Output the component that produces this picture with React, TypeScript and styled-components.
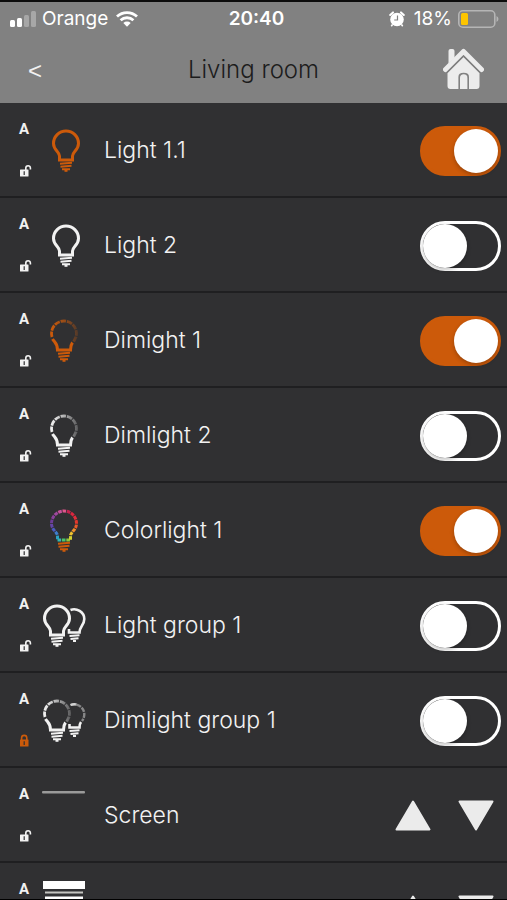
import React, { useState } from "react";
import styled, { createGlobalStyle } from "styled-components";

const ORANGE = "#cc5a0a";
const PALE = "#f2f2f2";

const GlobalStyle = createGlobalStyle`
  *, *::before, *::after { box-sizing: border-box; }
  body { margin: 0; background: #000; }
`;

const Screen = styled.div`
  display: flex;
  flex-direction: column;
  height: 100vh;
  overflow: hidden;
  border-top: 2px solid #0c0c0c;
  border-bottom: 1px solid #000;
  background: #303032;
  color: ${PALE};
  font-family: Inter, "Liberation Sans", sans-serif;
`;

const Header = styled.header`
  flex: none;
  background: #818181;
`;

const StatusBar = styled.div`
  display: grid;
  grid-template-columns: 1fr auto 1fr;
  align-items: center;
  height: 33px;
  padding: 0 8px 0 10px;
  color: #fff;
  font-size: 19px;
  line-height: 24px;
`;

const StatusGroup = styled.div<{ $end?: boolean }>`
  display: flex;
  align-items: center;
  gap: 6px;
  justify-content: ${(p) => (p.$end ? "flex-end" : "flex-start")};
`;

const Clock = styled.time`
  padding-left: 4px;
  font-weight: 600;
`;

const NavBar = styled.div`
  display: grid;
  grid-template-columns: 1fr auto 1fr;
  align-items: center;
  height: 68px;
  padding: 0 23px;
`;

const NavButton = styled.button<{ $end?: boolean }>`
  display: flex;
  justify-self: ${(p) => (p.$end ? "end" : "start")};
  padding: 0;
  border: 0;
  background: none;
  color: ${PALE};
  cursor: pointer;
`;

const BackButton = styled(NavButton)`
  padding: 4px 5px 0;
  font: 24px/28px "Liberation Sans", sans-serif;
`;

const Title = styled.h1`
  margin: 0;
  padding-top: 2px;
  color: #1c1c1c;
  font-size: 24px;
  font-weight: 300;
  line-height: 32px;
`;

const List = styled.ul`
  flex: 1;
  min-height: 0;
  margin: 0;
  padding: 0;
  overflow-y: auto;
  scrollbar-width: none;
  list-style: none;
`;

const Row = styled.li`
  display: grid;
  grid-template-columns: 23px 44px 1fr auto;
  align-items: center;
  height: 95px;
  padding: 0 6px 0 19px;
  border-bottom: 2px solid #1f1f21;
`;

const Marks = styled.div`
  display: flex;
  flex-direction: column;
  align-items: flex-start;
  gap: 26px;
  padding-bottom: 4px;
`;

const Auto = styled.span`
  font: 700 15px/18px Roboto, sans-serif;
`;

const Name = styled.label`
  padding-left: 18px;
  font-size: 23px;
  font-weight: 300;
  line-height: 32px;
`;

const Toggle = styled.input`
  appearance: none;
  width: 81px;
  height: 50px;
  margin: 2px 0 0;
  border: 3px solid #fff;
  border-radius: 25px;
  cursor: pointer;

  &::before {
    content: "";
    display: block;
    width: 44px;
    height: 44px;
    border-radius: 50%;
    background: #fff;
    box-shadow: 0 2px 4px rgba(0, 0, 0, 0.25);
  }

  &:checked {
    border-color: ${ORANGE};
    background: ${ORANGE};
  }

  &:checked::before {
    margin-left: auto;
  }
`;

const Arrows = styled.div`
  display: flex;
  gap: 27px;
  padding-right: 7px;
`;

const ArrowButton = styled.button`
  display: flex;
  padding: 0;
  border: 0;
  background: none;
  cursor: pointer;
`;

const Drawing = styled.svg`
  display: block;
  flex: none;
`;

const BODY = "M-6.5 57 H6.5 V53 C6.5 49 12.5 47 12.5 40.5 A12.5 12.5 0 0 0 -12.5 40.5 C-12.5 47 -6.5 49 -6.5 53 Z";

function Base({ color }: { color: string }) {
  return (
    <g stroke={color} strokeWidth="2" fill="none">
      <path d="M-6 60.8 L6 59.8 M-5.5 63.8 L5.5 62.8 M-4 66.2 H4" />
      <path d="M-1.5 67.8 H1.5" />
    </g>
  );
}

function PlainBulb({ color }: { color: string }) {
  return (
    <g>
      <path d={BODY} fill="none" stroke={color} strokeWidth="3" />
      <Base color={color} />
    </g>
  );
}

function DimBulb({ color, id }: { color: string; id: string }) {
  return (
    <g>
      <defs>
        <linearGradient id={id} gradientUnits="userSpaceOnUse" x1="-13" y1="0" x2="13" y2="0">
          <stop offset="0" stopColor={color} />
          <stop offset="0.45" stopColor={color} stopOpacity="0.7" />
          <stop offset="1" stopColor={color} stopOpacity="0.25" />
        </linearGradient>
      </defs>
      <path
        d="M-12 44 A12.5 12.5 0 1 1 12 44 L9.5 49"
        fill="none"
        stroke={`url(#${id})`}
        strokeWidth="2.8"
        strokeDasharray="5.6 0.9"
      />
      <path d="M-11.5 46 C-9.5 49.5 -6.5 50 -6.5 57 H6.5 C6.5 53 7 51.5 8.5 49.5" fill="none" stroke={color} strokeWidth="3" />
      <Base color={color} />
    </g>
  );
}

const SPECTRUM = [
  "#35b8b0", "#49c46b", "#8cc63f", "#d5d32f", "#efc12e", "#ef8f2c", "#ea5a2a",
  "#e5382c", "#e22d3a", "#d9263f", "#c3224f", "#e0568c", "#c8509c", "#a0489f",
  "#8a3f9c", "#6e3c98", "#6545a8", "#4c5cc0", "#3f7ccc", "#2ba3c4",
];

function ColorBulb() {
  return (
    <g>
      {SPECTRUM.map((color, i) => (
        <path
          key={color}
          d={BODY}
          pathLength={20}
          fill="none"
          stroke={color}
          strokeWidth="3"
          strokeDasharray="0.82 19.18"
          strokeDashoffset={-i}
        />
      ))}
      <Base color={ORANGE} />
    </g>
  );
}

type Kind = "light" | "dim" | "color" | "group" | "dimgroup" | "screen" | "blind";

function DeviceIcon({ kind, on, id }: { kind: Kind; on: boolean; id: string }) {
  const color = on ? ORANGE : PALE;
  return (
    <Drawing width="44" height="94" viewBox="42 0 44 94" aria-hidden="true">
      {kind === "light" && <g transform="translate(66 0)"><PlainBulb color={color} /></g>}
      {kind === "dim" && <g transform="translate(64 0)"><DimBulb color={color} id={id} /></g>}
      {kind === "color" && <g transform="translate(64 0)"><ColorBulb /></g>}
      {kind === "group" && (
        <>
          <g transform="translate(57 0)"><PlainBulb color={color} /></g>
          <g transform="translate(74.5 0)" fill="none" stroke={color}>
            <path d="M-4 32 C2 29.5 9.8 34 9.8 41 C9.8 47 5 48.5 5 54.5 H-5.5 V51" strokeWidth="2.6" />
            <path d="M-5 58 L5 57.2 M-4 61 L4 60.2 M-1.5 63 H1.5" strokeWidth="2" />
          </g>
        </>
      )}
      {kind === "dimgroup" && (
        <>
          <g transform="translate(57 0)"><DimBulb color={color} id={id} /></g>
          <g transform="translate(74.5 0)" fill="none" stroke={color}>
            <path d="M-4 32 C2 29.5 9.8 34 9.8 41 Q9.8 45 7.5 48" strokeWidth="2.4" strokeDasharray="5 1" opacity="0.45" />
            <path d="M-4 32 Q-1 30.8 2 31.5" strokeWidth="2.4" opacity="0.7" />
            <path d="M6.5 49 Q5 51 5 54.5 H-5 V51" strokeWidth="2.6" />
            <path d="M-5 58 L5 57.2 M-4 61 L4 60.2 M-1.5 63 H1.5" strokeWidth="2" />
          </g>
        </>
      )}
      {kind === "screen" && <rect x="42" y="23" width="43" height="2.6" rx="1" fill="#9a9a9a" />}
      {kind === "blind" && (
        <g fill="#fff">
          <rect x="43" y="18" width="42" height="8" />
          <rect x="45" y="28.5" width="38" height="2" fill="#c4c4c0" />
          <path d="M45 33.5h38v3h-38z M45 39h38v3h-38z M45 44.5h38v3h-38z" />
        </g>
      )}
    </Drawing>
  );
}

function Lock({ locked }: { locked: boolean }) {
  const color = locked ? ORANGE : PALE;
  return (
    <Drawing width="13" height="13" viewBox="0 0 13 13" role="img" aria-label={locked ? "Locked" : "Unlocked"}>
      <path
        d={locked ? "M2.6 6 V4 a2.6 2.6 0 0 1 5.2 0 V6" : "M6.8 6.5 V4 a2.3 2.3 0 0 1 4.6 0 V5.5"}
        fill="none"
        stroke={color}
        strokeWidth="1.6"
      />
      <rect x="1" y="5.5" width="8.5" height="7" rx="0.5" fill={color} />
      <path d="M5.2 7.3 V11" stroke="#303032" strokeWidth="1.2" />
    </Drawing>
  );
}

function Arrow({ down }: { down?: boolean }) {
  return (
    <Drawing width="36" height="31" viewBox="0 0 36 31" aria-hidden="true">
      <path
        d={down ? "M1.5 1.5 H34.5 L18 29.5 Z" : "M18 1.5 L34.5 29.5 H1.5 Z"}
        fill="#ebebeb"
        stroke="#ebebeb"
        strokeWidth="2"
        strokeLinejoin="round"
      />
    </Drawing>
  );
}

function Signal() {
  return (
    <Drawing width="26" height="16" viewBox="0 0 26 16" role="img" aria-label="Signal">
      <g fill="#fff">
        <rect x="0" y="9" width="5" height="7" rx="1.5" />
        <rect x="7" y="7" width="5" height="9" rx="1.5" />
        <rect x="14" y="4" width="5" height="12" rx="1.5" opacity="0.3" />
        <rect x="21" y="0" width="5" height="16" rx="1.5" opacity="0.3" />
      </g>
    </Drawing>
  );
}

function Wifi() {
  return (
    <Drawing width="24" height="16" viewBox="-2 0 24 16" role="img" aria-label="Wi-Fi">
      <path d="M1 5.6 A14.5 14.5 0 0 1 21 5.6 M4.6 9.3 A9.3 9.3 0 0 1 17.4 9.3" fill="none" stroke="#fff" strokeWidth="2.8" />
      <path d="M7.3 12 A5.4 5.4 0 0 1 14.7 12 L11 15.8 Z" fill="#fff" />
    </Drawing>
  );
}

function Alarm() {
  return (
    <Drawing width="19" height="16" viewBox="0 0 19 16" role="img" aria-label="Alarm">
      <circle cx="8" cy="8.5" r="6.8" fill="#fff" />
      <path d="M1.2 4 L4 1.4 M14.8 4 L12 1.4" stroke="#fff" strokeWidth="2" strokeLinecap="round" />
      <path d="M3.5 13.5 L2.3 15.2 M12.5 13.5 L13.7 15.2" stroke="#fff" strokeWidth="1.5" />
      <path d="M8.5 4.5 V9 H5.2" fill="none" stroke="#818181" strokeWidth="1.2" />
    </Drawing>
  );
}

function Battery() {
  return (
    <Drawing width="41" height="18" viewBox="0 0 41 18" role="img" aria-label="Battery">
      <rect x="0.8" y="0.8" width="36" height="16.4" rx="4" fill="none" stroke="#b5b5b5" strokeWidth="1.6" />
      <rect x="3" y="3" width="7" height="12" rx="1.5" fill="#fdc500" />
      <path d="M38.5 6 Q40.5 7 40.5 9 Q40.5 11 38.5 12 Z" fill="#b5b5b5" />
    </Drawing>
  );
}

function Home() {
  return (
    <Drawing width="41" height="42" viewBox="0 0 41 42" aria-hidden="true">
      <path
        d="M2.5 21.5 L20.5 3.5 L38.5 21.5"
        fill="none"
        stroke="#ececec"
        strokeWidth="5"
        strokeLinecap="round"
        strokeLinejoin="round"
      />
      <path d="M5.5 15.5 V3 Q5.5 1 7.5 1 H9.5 Q11.5 1 11.5 3 V10 Z" fill="#ececec" />
      <path
        d="M20.5 9 L36.5 25 V38 Q36.5 41 33.5 41 H26 V29 Q26 24.8 20.7 24.8 Q15.4 24.8 15.4 29 V41 H7.5 Q4.5 41 4.5 38 V25 Z"
        fill="#ececec"
      />
      <path d="M17 41 V30 Q17 26.3 20.7 26.3 Q24.4 26.3 24.4 30 V41 Z" fill="#ececec" />
      <path d="M4 24.5 L20.5 8 L37 24.5" fill="none" stroke="#818181" strokeWidth="1.3" />
    </Drawing>
  );
}

interface Device {
  id: string;
  name?: string;
  kind: Kind;
  on?: boolean;
  locked?: boolean;
}

const DEVICES: Device[] = [
  { id: "light-1", name: "Light 1.1", kind: "light", on: true },
  { id: "light-2", name: "Light 2", kind: "light" },
  { id: "dim-1", name: "Dimight 1", kind: "dim", on: true },
  { id: "dim-2", name: "Dimlight 2", kind: "dim" },
  { id: "color-1", name: "Colorlight 1", kind: "color", on: true },
  { id: "group-1", name: "Light group 1", kind: "group" },
  { id: "dimgroup-1", name: "Dimlight group 1", kind: "dimgroup", locked: true },
  { id: "screen-1", name: "Screen", kind: "screen" },
  { id: "blind-1", kind: "blind" },
];

function DeviceRow({ device }: { device: Device }) {
  const [on, setOn] = useState(Boolean(device.on));
  const moves = device.kind === "screen" || device.kind === "blind";
  return (
    <Row>
      <Marks>
        <Auto>A</Auto>
        <Lock locked={Boolean(device.locked)} />
      </Marks>
      <DeviceIcon kind={device.kind} on={on} id={`fade-${device.id}`} />
      <Name as={moves ? "span" : "label"} htmlFor={moves ? undefined : device.id}>{device.name}</Name>
      {moves ? (
        <Arrows>
          <ArrowButton aria-label="Up"><Arrow /></ArrowButton>
          <ArrowButton aria-label="Down"><Arrow down /></ArrowButton>
        </Arrows>
      ) : (
        <Toggle id={device.id} type="checkbox" checked={on} onChange={(e) => setOn(e.target.checked)} />
      )}
    </Row>
  );
}

export default function App() {
  return (
    <Screen>
      <GlobalStyle />
      <Header>
        <StatusBar>
          <StatusGroup>
            <Signal />
            <span>Orange</span>
            <Wifi />
          </StatusGroup>
          <Clock>20:40</Clock>
          <StatusGroup $end>
            <Alarm />
            <span>18%</span>
            <Battery />
          </StatusGroup>
        </StatusBar>
        <NavBar>
          <BackButton aria-label="Back">&lt;</BackButton>
          <Title>Living room</Title>
          <NavButton $end aria-label="Home"><Home /></NavButton>
        </NavBar>
      </Header>
      <List>
        {DEVICES.map((device) => (
          <DeviceRow key={device.id} device={device} />
        ))}
      </List>
    </Screen>
  );
}
